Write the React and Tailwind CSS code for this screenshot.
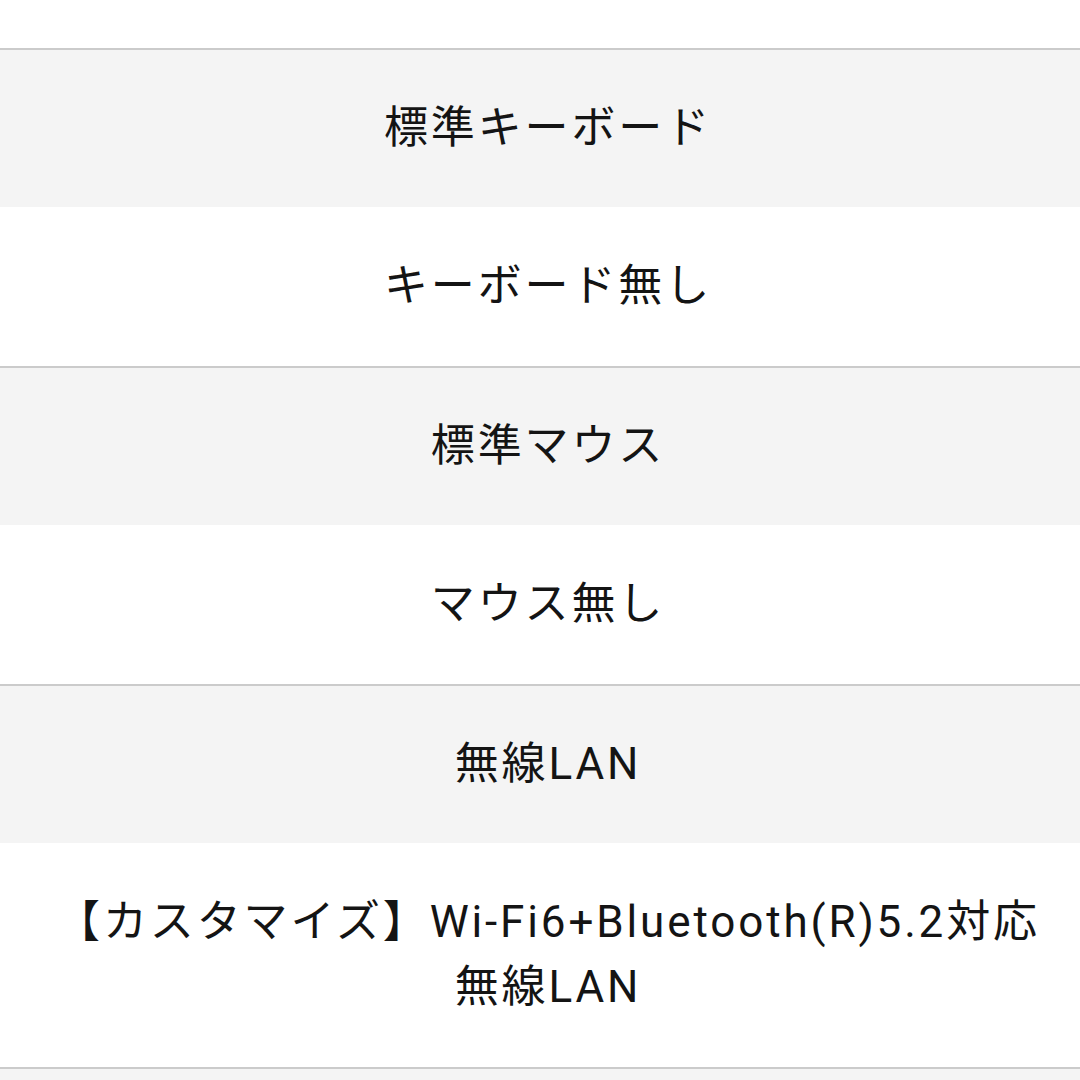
import React from 'react';

const options = [
  { label: '標準キーボード', shaded: true },
  { label: 'キーボード無し', shaded: false },
  { label: '標準マウス', shaded: true },
  { label: 'マウス無し', shaded: false },
  { label: '無線LAN', shaded: true },
  { label: '【カスタマイズ】Wi-Fi6+Bluetooth(R)5.2対応 無線LAN', shaded: false },
];

const App = () => {
  return (
    <div
      className="min-h-screen bg-white text-[#141414]"
      style={{ fontFamily: 'Roboto, "Noto Sans CJK JP", sans-serif' }}
    >
      <div className="h-[48px] bg-white" />
      {options.map((opt, i) => (
        <div
          key={i}
          className={
            opt.shaded
              ? 'border-t-2 border-[#cbcbcb] bg-[#f4f4f4] pl-[46px] pr-[30px] py-[46px] text-center text-[44px] leading-[65px] tracking-[0.065em]'
              : 'bg-white pl-[46px] pr-[30px] py-[47px] text-center text-[44px] leading-[65px] tracking-[0.065em]'
          }
        >
          {opt.label}
        </div>
      ))}
      <div className="h-[20px] border-t-2 border-[#cbcbcb] bg-[#f4f4f4]" />
    </div>
  );
};

export default App;
